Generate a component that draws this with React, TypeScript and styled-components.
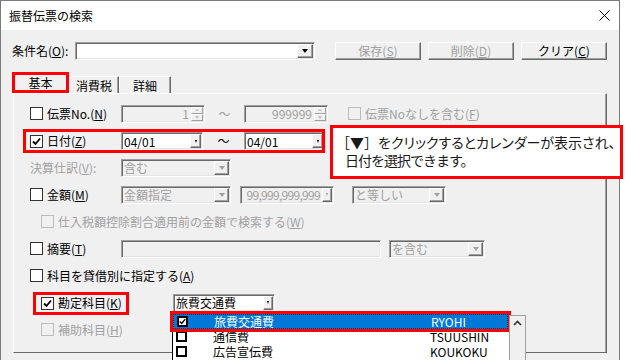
import React from "react";
import styled, { createGlobalStyle, css } from "styled-components";

const GlobalStyle = createGlobalStyle`
  html, body {
    margin: 0;
    padding: 0;
    background: #fff;
    overflow: hidden;
  }
  body {
    font-family: "Noto Sans CJK JP", "Noto Sans", sans-serif;
    font-size: 12px;
    color: #000;
  }
  u {
    text-underline-offset: 1px;
  }
`;

const sunken = css`
  box-sizing: border-box;
  border: 1px solid;
  border-color: #a0a0a0 #fff #fff #a0a0a0;
  box-shadow: inset 1px 1px 0 #696969, inset -1px -1px 0 #e3e3e3;
`;

const raised = css`
  box-sizing: border-box;
  border: 1px solid;
  border-color: #fff #696969 #696969 #fff;
  box-shadow: inset -1px -1px 0 #a0a0a0;
  background: #f0f0f0;
`;

const Window = styled.div`
  position: relative;
  width: 620px;
  height: 360px;
  box-sizing: border-box;
  border: 1px solid #7a7a7a;
  border-bottom: none;
  background: #f0f0f0;
`;

const TitleBar = styled.div`
  height: 29px;
  background: #fff;
  display: flex;
  align-items: center;
  justify-content: space-between;
  padding: 0 9px 0 8px;
`;

const Title = styled.span`
  font-size: 12px;
  line-height: 16px;
`;

const Body = styled.div`
  height: 330px;
  box-sizing: border-box;
  padding: 11px 0 0 11px;
  overflow: hidden;
`;

const TopRow = styled.div`
  display: flex;
  align-items: center;
  height: 19px;
`;

const FieldLabel = styled.span<{ $w?: number; $disabled?: boolean }>`
  width: ${(p) => (p.$w ? `${p.$w}px` : "auto")};
  flex: none;
  white-space: nowrap;
  line-height: 16px;
  color: ${(p) => (p.$disabled ? "#a0a0a0" : "#000")};
`;

const Button = styled.div<{ $disabled?: boolean }>`
  ${raised};
  width: 86px;
  height: 18px;
  display: flex;
  align-items: center;
  justify-content: center;
  line-height: 14px;
  color: ${(p) => (p.$disabled ? "#a0a0a0" : "#000")};
`;

const ButtonGroup = styled.div`
  display: flex;
  gap: 7px;
  margin-left: 20px;
`;

const TabStrip = styled.div`
  display: flex;
  align-items: flex-end;
  height: 21px;
  margin-top: 12px;
`;

const Tab = styled.div<{ $active?: boolean; $w: number }>`
  box-sizing: border-box;
  width: ${(p) => p.$w}px;
  display: flex;
  justify-content: center;
  align-items: center;
  line-height: 14px;
  ${(p) =>
    p.$active
      ? css`
          height: 21px;
          border: 3px solid #ff0000;
          padding-top: 1px;
          background: #f0f0f0;
        `
      : css`
          height: 17px;
          border-top: 1px solid #fff;
          border-left: 1px solid #fff;
          border-right: 1px solid #696969;
          box-shadow: inset -1px 0 0 #a0a0a0;
          padding-top: 1px;
        `}
`;

const Panel = styled.div`
  box-sizing: border-box;
  width: 594px;
  height: 260px;
  margin-left: 1px;
  border: 1px solid;
  border-color: #fff #696969 #696969 #fff;
  box-shadow: inset -1px 0 0 #a0a0a0;
  padding: 6px 0 0 0;
`;

const Row = styled.div<{ $indent?: number }>`
  display: flex;
  align-items: center;
  height: 27px;
  padding-left: ${(p) => p.$indent ?? 16}px;
`;

const HighlightRow = styled.div<{ $left: number; $w: number; $h: number; $pad: number }>`
  box-sizing: border-box;
  display: flex;
  align-items: center;
  margin: 2px 0 1px ${(p) => p.$left}px;
  width: ${(p) => p.$w}px;
  height: ${(p) => p.$h}px;
  border: 3px solid #ff0000;
  padding-left: ${(p) => p.$pad}px;
  overflow: hidden;
  flex: none;
`;

const LabelCell = styled.div<{ $w?: number }>`
  display: flex;
  align-items: center;
  gap: 4px;
  width: ${(p) => (p.$w ? `${p.$w}px` : "auto")};
  flex: none;
`;

const Box = styled.span<{ $disabled?: boolean }>`
  box-sizing: border-box;
  width: 13px;
  height: 13px;
  flex: none;
  display: inline-flex;
  align-items: center;
  justify-content: center;
  border: 1px solid ${(p) => (p.$disabled ? "#bcbcbc" : "#333")};
  background: ${(p) => (p.$disabled ? "#f0f0f0" : "#fff")};
`;

const CheckMark = ({ color = "#000" }: { color?: string }) => (
  <svg width="9" height="9" viewBox="0 0 9 9">
    <path d="M1 4.5 L3.5 7 L8 1.5" fill="none" stroke={color} strokeWidth="1.8" />
  </svg>
);

const CheckBox = ({ checked, disabled }: { checked?: boolean; disabled?: boolean }) => (
  <Box $disabled={disabled}>{checked && <CheckMark color={disabled ? "#a0a0a0" : "#000"} />}</Box>
);

const Arrow = styled.span<{ $size: number; $color: string }>`
  width: 0;
  height: 0;
  border-left: ${(p) => p.$size}px solid transparent;
  border-right: ${(p) => p.$size}px solid transparent;
  border-top: ${(p) => Math.ceil(p.$size * 0.7) + 1}px solid ${(p) => p.$color};
`;

const UpArrow = styled.span<{ $color: string }>`
  width: 0;
  height: 0;
  border-left: 2px solid transparent;
  border-right: 2px solid transparent;
  border-bottom: 2px solid ${(p) => p.$color};
`;

const Combo = styled.div<{ $w: number; $disabled?: boolean; $ml?: number }>`
  ${sunken};
  width: ${(p) => p.$w}px;
  height: 18px;
  flex: none;
  display: flex;
  align-items: stretch;
  margin-left: ${(p) => p.$ml ?? 0}px;
  padding: 1px;
  background: ${(p) => (p.$disabled ? "#f0f0f0" : "#fff")};
  color: ${(p) => (p.$disabled ? "#a0a0a0" : "#000")};
`;

const ComboText = styled.span<{ $right?: boolean; $tight?: boolean }>`
  flex: 1;
  min-width: 0;
  padding: 0 2px 0 1px;
  display: flex;
  align-items: center;
  justify-content: ${(p) => (p.$right ? "flex-end" : "flex-start")};
  white-space: nowrap;
  letter-spacing: ${(p) => (p.$tight ? "-0.7px" : "0")};
`;

const DropButton = styled.span<{ $w: number }>`
  ${raised};
  width: ${(p) => p.$w}px;
  flex: none;
  display: flex;
  align-items: center;
  justify-content: center;
`;

const SpinButtons = styled.span`
  width: 12px;
  flex: none;
  display: flex;
  flex-direction: column;
`;

const SpinHalf = styled.span`
  flex: 1;
  box-sizing: border-box;
  border: 1px solid;
  border-color: #fff #a0a0a0 #a0a0a0 #fff;
  display: flex;
  align-items: center;
  justify-content: center;
`;

const Tilde = styled.span<{ $w: number; $disabled?: boolean }>`
  width: ${(p) => p.$w}px;
  flex: none;
  text-align: center;
  line-height: 16px;
  color: ${(p) => (p.$disabled ? "#a0a0a0" : "#000")};
`;

const Callout = styled.div`
  position: absolute;
  left: 329px;
  top: 124px;
  width: 293px;
  height: 54px;
  box-sizing: border-box;
  border: 3px solid #ff0000;
  background: #fff;
  padding: 5px 0 0 3px;
  font-size: 14px;
  line-height: 18px;
  color: #1a1a1a;
  white-space: nowrap;
`;

const CalloutLine = styled.div<{ $spacing?: number; $indent?: number; $palt?: boolean }>`
  letter-spacing: ${(p) => p.$spacing ?? 0}px;
  padding-left: ${(p) => p.$indent ?? 0}px;
  font-feature-settings: ${(p) => (p.$palt ? '"palt"' : "normal")};
`;

const Bracket = styled.span`
  font-feature-settings: normal;
`;

const DropList = styled.div`
  position: absolute;
  left: 171px;
  top: 312px;
  display: flex;
  height: 48px;
`;

const ListArea = styled.div`
  width: 337px;
  background: #fff;
  border-left: 1px solid #000;
  box-sizing: border-box;
  padding-top: 1px;
`;

const ListRow = styled.div<{ $selected?: boolean }>`
  display: flex;
  align-items: center;
  height: 15px;
  box-sizing: border-box;
  padding-left: 3px;
  color: ${(p) => (p.$selected ? "#fff" : "#000")};
  ${(p) =>
    p.$selected &&
    css`
      width: 335px;
      background: #0078d7;
      outline: 3px solid #ff0000;
      border: 1px dotted #1d2d44;
    `}
`;

const ListBox = styled.span`
  box-sizing: border-box;
  width: 11px;
  height: 11px;
  border: 2px solid #000;
  background: #fff;
  display: flex;
  align-items: center;
  justify-content: center;
  flex: none;
`;

const ListName = styled.span`
  width: 217px;
  margin-left: 26px;
  line-height: 15px;
  white-space: nowrap;
`;

const ListCode = styled.span`
  line-height: 15px;
`;

const ScrollBar = styled.div`
  width: 17px;
  margin-top: 2px;
  box-sizing: border-box;
  border: 1px solid #a0a0a0;
  border-bottom: none;
  background: #f0f0f0;
  display: flex;
  justify-content: center;
  padding-top: 4px;
`;

const CloseIcon = () => (
  <svg width="11" height="11" viewBox="0 0 11 11">
    <path d="M0.5 0.5 L10.5 10.5 M10.5 0.5 L0.5 10.5" stroke="#000" strokeWidth="1" />
  </svg>
);

const Chevron = () => (
  <svg width="9" height="6" viewBox="0 0 9 6">
    <path d="M1 5 L4.5 1.5 L8 5" fill="none" stroke="#333" strokeWidth="1.6" />
  </svg>
);

const accounts = [
  { name: "旅費交通費", code: "RYOHI", checked: true },
  { name: "通信費", code: "TSUUSHIN", checked: false },
  { name: "広告宣伝費", code: "KOUKOKU", checked: false },
];

const Spin = ({ w, value }: { w: number; value: string }) => (
  <Combo $w={w} $disabled>
    <ComboText $right>{value}</ComboText>
    <SpinButtons>
      <SpinHalf>
        <UpArrow $color="#c0c0c0" />
      </SpinHalf>
      <SpinHalf>
        <Arrow $size={2} $color="#c0c0c0" />
      </SpinHalf>
    </SpinButtons>
  </Combo>
);

export default function App() {
  return (
    <>
      <GlobalStyle />
      <Window>
        <TitleBar>
          <Title>振替伝票の検索</Title>
          <CloseIcon />
        </TitleBar>
        <Body>
          <TopRow>
            <FieldLabel $w={63}>
              条件名(<u>O</u>):
            </FieldLabel>
            <Combo $w={240}>
              <ComboText />
              <DropButton $w={16}>
                <Arrow $size={3.5} $color="#000" />
              </DropButton>
            </Combo>
            <ButtonGroup>
              <Button $disabled>
                保存(<u>S</u>)
              </Button>
              <Button $disabled>
                削除(<u>D</u>)
              </Button>
              <Button>
                クリア(<u>C</u>)
              </Button>
            </ButtonGroup>
          </TopRow>

          <TabStrip>
            <Tab $active $w={57}>
              基本
            </Tab>
            <Tab $w={50}>消費税</Tab>
            <Tab $w={52}>詳細</Tab>
          </TabStrip>

          <Panel>
            <Row>
              <LabelCell $w={91}>
                <CheckBox />
                <FieldLabel>
                  伝票No.(<u>N</u>)
                </FieldLabel>
              </LabelCell>
              <Spin w={84} value="1" />
              <Tilde $w={39} $disabled>
                ～
              </Tilde>
              <Spin w={84} value="999999" />
              <LabelCell style={{ marginLeft: 20 }}>
                <CheckBox disabled />
                <FieldLabel $disabled>
                  伝票Noなしを含む(<u>F</u>)
                </FieldLabel>
              </LabelCell>
            </Row>

            <Row $indent={0}>
              <HighlightRow $left={9} $w={302} $h={24} $pad={4}>
                <LabelCell $w={91}>
                  <CheckBox checked />
                  <FieldLabel>
                    日付(<u>Z</u>)
                  </FieldLabel>
                </LabelCell>
                <Combo $w={82}>
                  <ComboText>04/01</ComboText>
                  <DropButton $w={11}>
                    <Arrow $size={1.5} $color="#000" />
                  </DropButton>
                </Combo>
                <Tilde $w={41}>～</Tilde>
                <Combo $w={81}>
                  <ComboText>04/01</ComboText>
                  <DropButton $w={11}>
                    <Arrow $size={1.5} $color="#000" />
                  </DropButton>
                </Combo>
              </HighlightRow>
            </Row>

            <Row>
              <FieldLabel $w={91} $disabled>
                決算仕訳(<u>V</u>):
              </FieldLabel>
              <Combo $w={110} $disabled>
                <ComboText>含む</ComboText>
                <DropButton $w={15}>
                  <Arrow $size={3.5} $color="#a0a0a0" />
                </DropButton>
              </Combo>
            </Row>

            <Row>
              <LabelCell $w={91}>
                <CheckBox />
                <FieldLabel>
                  金額(<u>M</u>)
                </FieldLabel>
              </LabelCell>
              <Combo $w={110} $disabled>
                <ComboText>金額指定</ComboText>
                <DropButton $w={15}>
                  <Arrow $size={3.5} $color="#a0a0a0" />
                </DropButton>
              </Combo>
              <Combo $w={94} $disabled $ml={9}>
                <ComboText $right $tight>
                  99,999,999,999
                </ComboText>
                <DropButton $w={10}>
                  <Arrow $size={1.5} $color="#a0a0a0" />
                </DropButton>
              </Combo>
              <Combo $w={94} $disabled $ml={18}>
                <ComboText>と等しい</ComboText>
                <DropButton $w={15}>
                  <Arrow $size={3.5} $color="#a0a0a0" />
                </DropButton>
              </Combo>
            </Row>

            <Row $indent={27}>
              <LabelCell>
                <CheckBox disabled />
                <FieldLabel $disabled>
                  仕入税額控除割合適用前の金額で検索する(<u>W</u>)
                </FieldLabel>
              </LabelCell>
            </Row>

            <Row>
              <LabelCell $w={91}>
                <CheckBox />
                <FieldLabel>
                  摘要(<u>T</u>)
                </FieldLabel>
              </LabelCell>
              <Combo $w={260} $disabled>
                <ComboText />
              </Combo>
              <Combo $w={96} $disabled $ml={8}>
                <ComboText>を含む</ComboText>
                <DropButton $w={15}>
                  <Arrow $size={3.5} $color="#a0a0a0" />
                </DropButton>
              </Combo>
            </Row>

            <Row>
              <LabelCell>
                <CheckBox />
                <FieldLabel>
                  科目を貸借別に指定する(<u>A</u>)
                </FieldLabel>
              </LabelCell>
            </Row>

            <Row $indent={0}>
              <HighlightRow $left={19} $w={96} $h={23} $pad={5}>
                <LabelCell>
                  <CheckBox checked />
                  <FieldLabel>
                    勘定科目(<u>K</u>)
                  </FieldLabel>
                </LabelCell>
              </HighlightRow>
              <Combo $w={102} $ml={44}>
                <ComboText>旅費交通費</ComboText>
                <DropButton $w={10}>
                  <Arrow $size={1.5} $color="#000" />
                </DropButton>
              </Combo>
            </Row>

            <Row $indent={27}>
              <LabelCell>
                <CheckBox disabled />
                <FieldLabel $disabled>
                  補助科目(<u>H</u>)
                </FieldLabel>
              </LabelCell>
            </Row>
          </Panel>
        </Body>

        <Callout>
          <CalloutLine $palt>
            <Bracket>［▼］</Bracket>をクリックするとカレンダーが表示され、
          </CalloutLine>
          <CalloutLine $indent={9} $spacing={-1}>
            日付を選択できます。
          </CalloutLine>
        </Callout>

        <DropList>
          <ListArea>
            {accounts.map((a) => (
              <ListRow key={a.code} $selected={a.checked}>
                <ListBox>{a.checked && <CheckMark />}</ListBox>
                <ListName>{a.name}</ListName>
                <ListCode>{a.code}</ListCode>
              </ListRow>
            ))}
          </ListArea>
          <ScrollBar>
            <Chevron />
          </ScrollBar>
        </DropList>
      </Window>
    </>
  );
}
